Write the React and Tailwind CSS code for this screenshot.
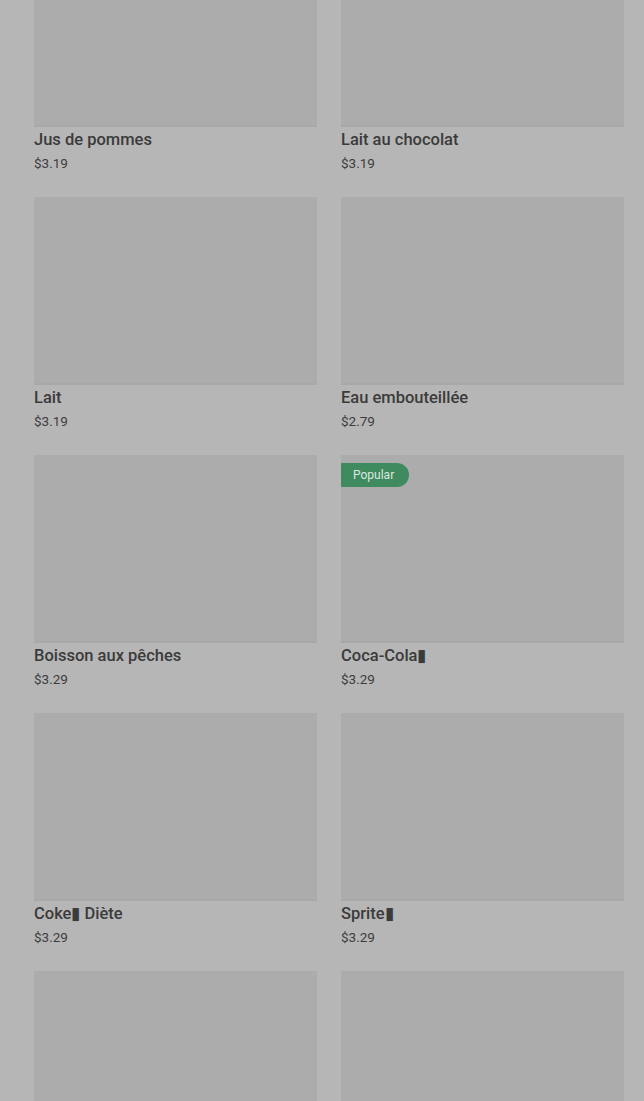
const items = [
  { name: "Jus de pommes", price: "$3.19" },
  { name: "Lait au chocolat", price: "$3.19" },
  { name: "Lait", price: "$3.19" },
  { name: "Eau embouteillée", price: "$2.79" },
  { name: "Boisson aux pêches", price: "$3.29" },
  { name: "Coca-Cola▮", price: "$3.29", popular: true },
  { name: "Coke▮ Diète", price: "$3.29" },
  { name: "Sprite▮", price: "$3.29" },
  { name: "", price: "" },
  { name: "", price: "" },
];

function Card({ item }) {
  return (
    <div>
      <div className="relative h-[188px] bg-[#acacac] border-b-2 border-[#a8a8a8]">
        {item.popular && (
          <span className="absolute left-0 top-2 flex h-6 items-center rounded-r-full bg-[#3f8a5f] pl-3 pr-[15px] text-[12px] text-[#dbe9e0]">
            Popular
          </span>
        )}
      </div>
      <div className="mt-[2px] text-[16.5px] leading-[22px] font-medium text-[#3b3b3b]">{item.name}</div>
      <div className="mt-[2px] text-[13.5px] leading-[20px] text-[#3d3d3d]">{item.price}</div>
    </div>
  );
}

export default function App() {
  return (
    <div className="h-[1101px] overflow-hidden bg-[#b6b6b6]" style={{ fontFamily: "Roboto, 'Noto Sans', sans-serif" }}>
      <div className="-mt-[61px] grid grid-cols-2 gap-x-6 gap-y-[24px] pl-[34px] pr-5">
        {items.map((it, i) => (
          <Card key={i} item={it} />
        ))}
      </div>
    </div>
  );
}
